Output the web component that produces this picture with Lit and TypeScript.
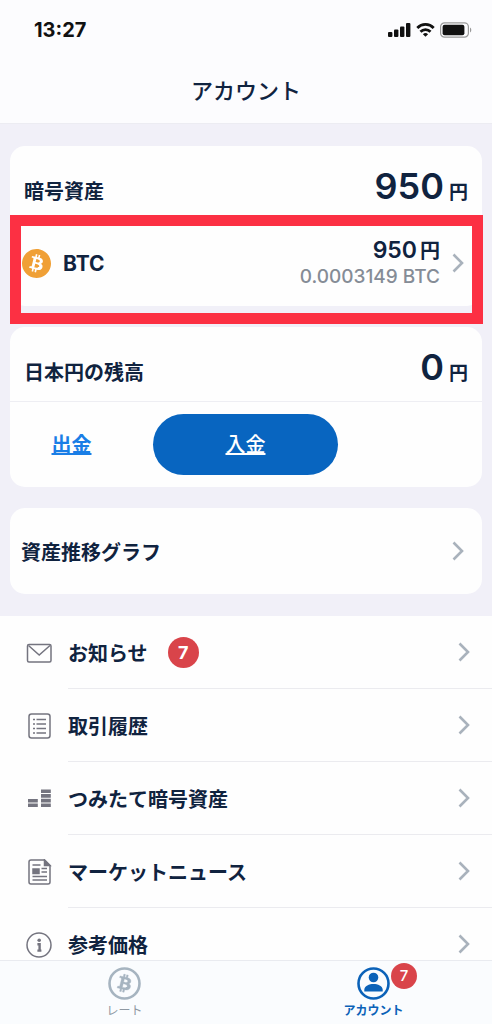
import { LitElement, html, css, svg, nothing } from "lit";
import { customElement, property } from "lit/decorators.js";

const BITCOIN_DISC =
  "M23.638 14.904c-1.602 6.43-8.113 10.34-14.542 8.736C2.67 22.05-1.244 15.525.362 9.105 1.962 2.67 8.475-1.243 14.9.358c6.43 1.605 10.342 8.115 8.738 14.548v-.002z";
const BITCOIN_SIGN =
  "M17.288 10.291c.24-1.59-.974-2.45-2.64-3.03l.54-2.153-1.315-.33-.525 2.107c-.345-.087-.705-.167-1.064-.25l.526-2.127-1.32-.33-.54 2.165c-.285-.067-.565-.132-.84-.2l-1.815-.45-.35 1.407s.975.225.955.236c.535.136.63.486.615.766l-1.477 5.92c-.075.166-.24.406-.614.314.015.02-.96-.24-.96-.24l-.66 1.51 1.71.426.93.242-.54 2.19 1.32.327.54-2.17c.36.1.705.19 1.05.273l-.51 2.154 1.32.33.545-2.19c2.24.427 3.93.257 4.64-1.774.57-1.637-.03-2.58-1.217-3.196.854-.193 1.5-.76 1.68-1.93h.01zm-3.01 4.22c-.404 1.64-3.157.75-4.05.53l.72-2.9c.896.23 3.757.67 3.33 2.37zm.41-4.24c-.37 1.49-2.662.735-3.405.55l.654-2.64c.744.18 3.137.524 2.75 2.084v.006z";

const chevron = html`<svg class="chevron" width="12" height="20" viewBox="0 0 12 20" aria-hidden="true">
  <path d="M1.500 1.500 10 10l-8.500 8.500" fill="none" stroke="currentColor" stroke-width="2.600" />
</svg>`;

const icons = {
  mail: svg`<rect x="1.500" y="4.500" width="23.500" height="17.500" rx="1.500" /><path d="M2.500 5.500 13.200 15 24 5.500" />`,
  history: svg`<rect x="3" y="1" width="21" height="24" rx="2.500" />
    <path d="M7 6.500h2M10.500 6.500h9.500M7 11h2M10.500 11h9.500M7 15.500h2M10.500 15.500h9.500M7 20h2M10.500 20h9.500" />`,
  stack: svg`<path d="M2 14.800h9.800M2 19.200h9.800M15 5.200h9.800M15 9.900h9.800M15 14.600h9.800M15 19.200h9.800" stroke-width="3.600" />`,
  news: svg`<path d="M18.500 1H5a2 2 0 0 0-2 2v20a2 2 0 0 0 2 2h17a2 2 0 0 0 2-2V6.500z" />
    <path d="M18.500 1v5.500H24z" fill="currentColor" />
    <path d="M7 10h6v4.500H7z" fill="currentColor" />
    <path d="M6.500 6h8M15.500 9.500H21M15.500 13H21M6.500 17.500H21M6.500 21H21" />`,
  info: svg`<circle cx="13" cy="13" r="12" />
    <circle cx="13.200" cy="8.300" r="1.800" fill="currentColor" stroke="none" />
    <path d="M11.400 12.200h2.200v6.600M11.400 18.600h4" stroke-width="2.400" />`,
};

interface MenuItem {
  label: string;
  icon: keyof typeof icons;
  count?: number;
}

const MENU: MenuItem[] = [
  { label: "お知らせ", icon: "mail", count: 7 },
  { label: "取引履歴", icon: "history" },
  { label: "つみたて暗号資産", icon: "stack" },
  { label: "マーケットニュース", icon: "news" },
  { label: "参考価格", icon: "info" },
];

const base = css`
  * {
    box-sizing: border-box;
  }
  a {
    color: inherit;
    text-decoration: none;
  }
  svg {
    display: block;
    flex: none;
  }
  .chevron {
    color: #a9b2bc;
  }
`;

@customElement("status-bar")
export class StatusBar extends LitElement {
  static styles = [
    base,
    css`
      :host {
        display: flex;
        justify-content: space-between;
        align-items: center;
        height: 60px;
        padding: 0 20px 0 34px;
        color: #111;
      }
      time {
        font-size: 20px;
        font-weight: 700;
      }
      .signals {
        display: flex;
        align-items: center;
        gap: 5px;
      }
    `,
  ];

  render() {
    return html`
      <time>13:27</time>
      <div class="signals">
        <svg width="23" height="14" viewBox="0 0 23 14" role="img" aria-label="電波">
          <g fill="currentColor">
            <rect x="0" y="9" width="4.400" height="5" rx="1" />
            <rect x="6" y="6.500" width="4.400" height="7.500" rx="1" />
            <rect x="12" y="3.500" width="4.400" height="10.500" rx="1" />
            <rect x="18" y="0" width="4.400" height="14" rx="1" />
          </g>
        </svg>
        <svg width="19" height="14" viewBox="0 0 18 14" role="img" aria-label="Wi-Fi">
          <g fill="none" stroke="currentColor" stroke-width="2.800">
            <path d="M.8 4.900a11.500 11.500 0 0 1 16.400 0" />
            <path d="M4 8.800a7 7 0 0 1 10 0" />
          </g>
          <path d="M9 13.800 6.400 11.200a3.800 3.800 0 0 1 5.200 0z" fill="currentColor" />
        </svg>
        <svg width="32" height="16" viewBox="0 0 32 16" role="img" aria-label="バッテリー">
          <rect x=".6" y=".8" width="27.800" height="14.400" rx="4" fill="none" stroke="#999" stroke-width="1.200" />
          <rect x="2.600" y="2.800" width="21.800" height="10.400" rx="2" fill="currentColor" />
          <path d="M30 5.500a3 3 0 0 1 0 5z" fill="#999" />
        </svg>
      </div>
    `;
  }
}

@customElement("menu-row")
export class MenuRow extends LitElement {
  @property({ attribute: false }) item!: MenuItem;

  static styles = [
    base,
    css`
      :host {
        display: block;
      }
      .row {
        display: flex;
        align-items: stretch;
        gap: 16px;
        height: 73px;
        padding-left: 26px;
      }
      .icon {
        align-self: center;
        color: #74747f;
      }
      .body {
        flex: 1;
        display: flex;
        align-items: center;
        padding-right: 22px;
        border-bottom: 1px solid #ebebef;
        font-size: 20px;
        font-weight: 700;
      }
      .label {
        flex: 1;
        display: flex;
        align-items: center;
        gap: 20px;
      }
      .count {
        display: grid;
        place-items: center;
        width: 31px;
        height: 31px;
        border-radius: 50%;
        background: #d9444a;
        color: #fff;
        font-size: 18px;
      }
    `,
  ];

  render() {
    const { label, icon, count } = this.item;
    return html`
      <a class="row" href="#">
        <svg class="icon" width="26" height="26" viewBox="0 0 26 26" fill="none" stroke="currentColor" stroke-width="1.500" aria-hidden="true">
          ${icons[icon]}
        </svg>
        <span class="body">
          <span class="label">${label}${count ? html`<span class="count">${count}</span>` : nothing}</span>
          ${chevron}
        </span>
      </a>
    `;
  }
}

@customElement("tab-bar")
export class TabBar extends LitElement {
  static styles = [
    base,
    css`
      :host {
        display: block;
        flex: none;
        background: #fafcfe;
        border-top: 1px solid #e9ebf0;
      }
      nav {
        display: grid;
        grid-template-columns: 1fr 1fr;
        column-gap: 12px;
        height: 63px;
        padding: 6px 0 0 6px;
      }
      .tab {
        display: flex;
        flex-direction: column;
        align-items: center;
        gap: 2px;
        color: #8e98a2;
        font-size: 12px;
        line-height: 18px;
      }
      .current {
        color: #0b62b8;
        font-weight: 700;
      }
      .glyph {
        position: relative;
      }
      .muted {
        color: #a6b4c0;
      }
      .badge {
        position: absolute;
        left: 34px;
        top: -4px;
        display: grid;
        place-items: center;
        width: 26px;
        height: 26px;
        border-radius: 50%;
        background: #d9444a;
        color: #fff;
        font-size: 15px;
        font-weight: 500;
      }
    `,
  ];

  render() {
    return html`
      <nav>
        <a class="tab" href="#">
          <svg class="muted" width="33" height="33" viewBox="0 0 33 33" aria-hidden="true">
            <circle cx="16.500" cy="16.500" r="15" fill="none" stroke="currentColor" stroke-width="2.600" />
            <path d=${BITCOIN_SIGN} transform="translate(2.100 2.100) scale(1.200)" fill="currentColor" stroke="currentColor" stroke-width=".3" />
          </svg>
          <span>レート</span>
        </a>
        <a class="tab current" href="#" aria-current="page">
          <span class="glyph">
            <svg width="33" height="33" viewBox="0 0 33 33" aria-hidden="true">
              <circle cx="16.500" cy="16.500" r="15" fill="none" stroke="currentColor" stroke-width="2.600" />
              <circle cx="16.500" cy="10.500" r="4.800" fill="currentColor" />
              <path d="M7.300 24.500v-1.700c0-4 5-5.800 9.200-5.800s9.200 1.800 9.200 5.800v1.700z" fill="currentColor" />
            </svg>
            <span class="badge">7</span>
          </span>
          <span>アカウント</span>
        </a>
      </nav>
    `;
  }
}

@customElement("app-root")
export class AppRoot extends LitElement {
  static styles = [
    base,
    css`
      :host {
        display: flex;
        flex-direction: column;
        height: 100vh;
        overflow: hidden;
        background: #f1f0f8;
        color: #10233f;
        font-family: Inter, "Noto Sans CJK JP", sans-serif;
      }
      header {
        flex: none;
        height: 124px;
        background: #fcfcfe;
        border-bottom: 1px solid #ececf2;
      }
      h1 {
        margin: 0;
        padding-top: 15px;
        text-align: center;
        font-size: 22px;
        font-weight: 500;
        line-height: 32px;
      }
      main {
        flex: 1;
        min-height: 0;
        overflow: hidden;
      }
      .cards {
        display: grid;
        gap: 21px;
        padding: 22px 10px;
      }
      .card {
        border-radius: 15px;
        background: #fefefe;
      }
      .head {
        display: flex;
        justify-content: space-between;
        align-items: baseline;
        height: 74px;
        padding: 18px 14px 0;
      }
      h2 {
        margin: 0;
        font-size: 20px;
        font-weight: 700;
      }
      .total {
        display: flex;
        align-items: baseline;
        gap: 5px;
        margin: 0;
        font-size: 36px;
        font-weight: 600;
        line-height: 44px;
      }
      .total small {
        font-size: 19px;
        font-weight: 700;
      }
      .asset {
        position: relative;
        display: flex;
        align-items: center;
        height: 86px;
        padding: 0 18px 0 12px;
      }
      .asset::after {
        content: "";
        position: absolute;
        z-index: 1;
        inset: -5px -1px -18px 0;
        border: 11px solid #fc3043;
      }
      .symbol {
        flex: 1;
        padding-left: 12px;
        font-size: 21px;
        font-weight: 700;
      }
      .value {
        padding-right: 12px;
        text-align: right;
        font-size: 23px;
        font-weight: 600;
        line-height: 26px;
      }
      .value small {
        display: block;
        color: #858c96;
        font-size: 19px;
        font-weight: 500;
      }
      .unit {
        padding-left: 3px;
        font-size: 20px;
        font-weight: 700;
      }
      .actions {
        display: grid;
        grid-template-columns: 143px 185px;
        align-items: center;
        height: 86px;
        border-top: 1px solid #eeeef3;
      }
      .actions button {
        padding: 0;
        border: 0;
        background: none;
        font: 700 20px/28px Inter, "Noto Sans CJK JP", sans-serif;
        text-decoration: underline;
        text-underline-offset: 1px;
        cursor: pointer;
      }
      .actions .withdraw {
        justify-self: center;
        padding-right: 20px;
        color: #1a7ee6;
      }
      .actions .deposit {
        height: 61px;
        border-radius: 31px;
        background: #0865c0;
        color: #fff;
        font-weight: 500;
      }
      .graph {
        display: flex;
        justify-content: space-between;
        align-items: center;
        height: 86px;
        padding: 0 18px 0 11px;
        font-size: 20px;
        font-weight: 700;
      }
      .menu {
        background: #fefefe;
      }
    `,
  ];

  render() {
    return html`
      <header>
        <status-bar></status-bar>
        <h1>アカウント</h1>
      </header>
      <main>
        <div class="cards">
          <section class="card">
            <div class="head">
              <h2>暗号資産</h2>
              <p class="total">950<small>円</small></p>
            </div>
            <a class="asset" href="#">
              <svg width="29" height="29" viewBox="0 0 24 24" aria-hidden="true">
                <path d=${BITCOIN_DISC} fill="#f0a036" />
                <path d=${BITCOIN_SIGN} fill="#fff" />
              </svg>
              <span class="symbol">BTC</span>
              <span class="value">950<span class="unit">円</span><small>0.0003149 BTC</small></span>
              ${chevron}
            </a>
          </section>
          <section class="card">
            <div class="head">
              <h2>日本円の残高</h2>
              <p class="total">0<small>円</small></p>
            </div>
            <div class="actions">
              <button class="withdraw" type="button">出金</button>
              <button class="deposit" type="button">入金</button>
            </div>
          </section>
          <a class="card graph" href="#">資産推移グラフ${chevron}</a>
        </div>
        <nav class="menu">${MENU.map((item) => html`<menu-row .item=${item}></menu-row>`)}</nav>
      </main>
      <tab-bar></tab-bar>
    `;
  }
}
